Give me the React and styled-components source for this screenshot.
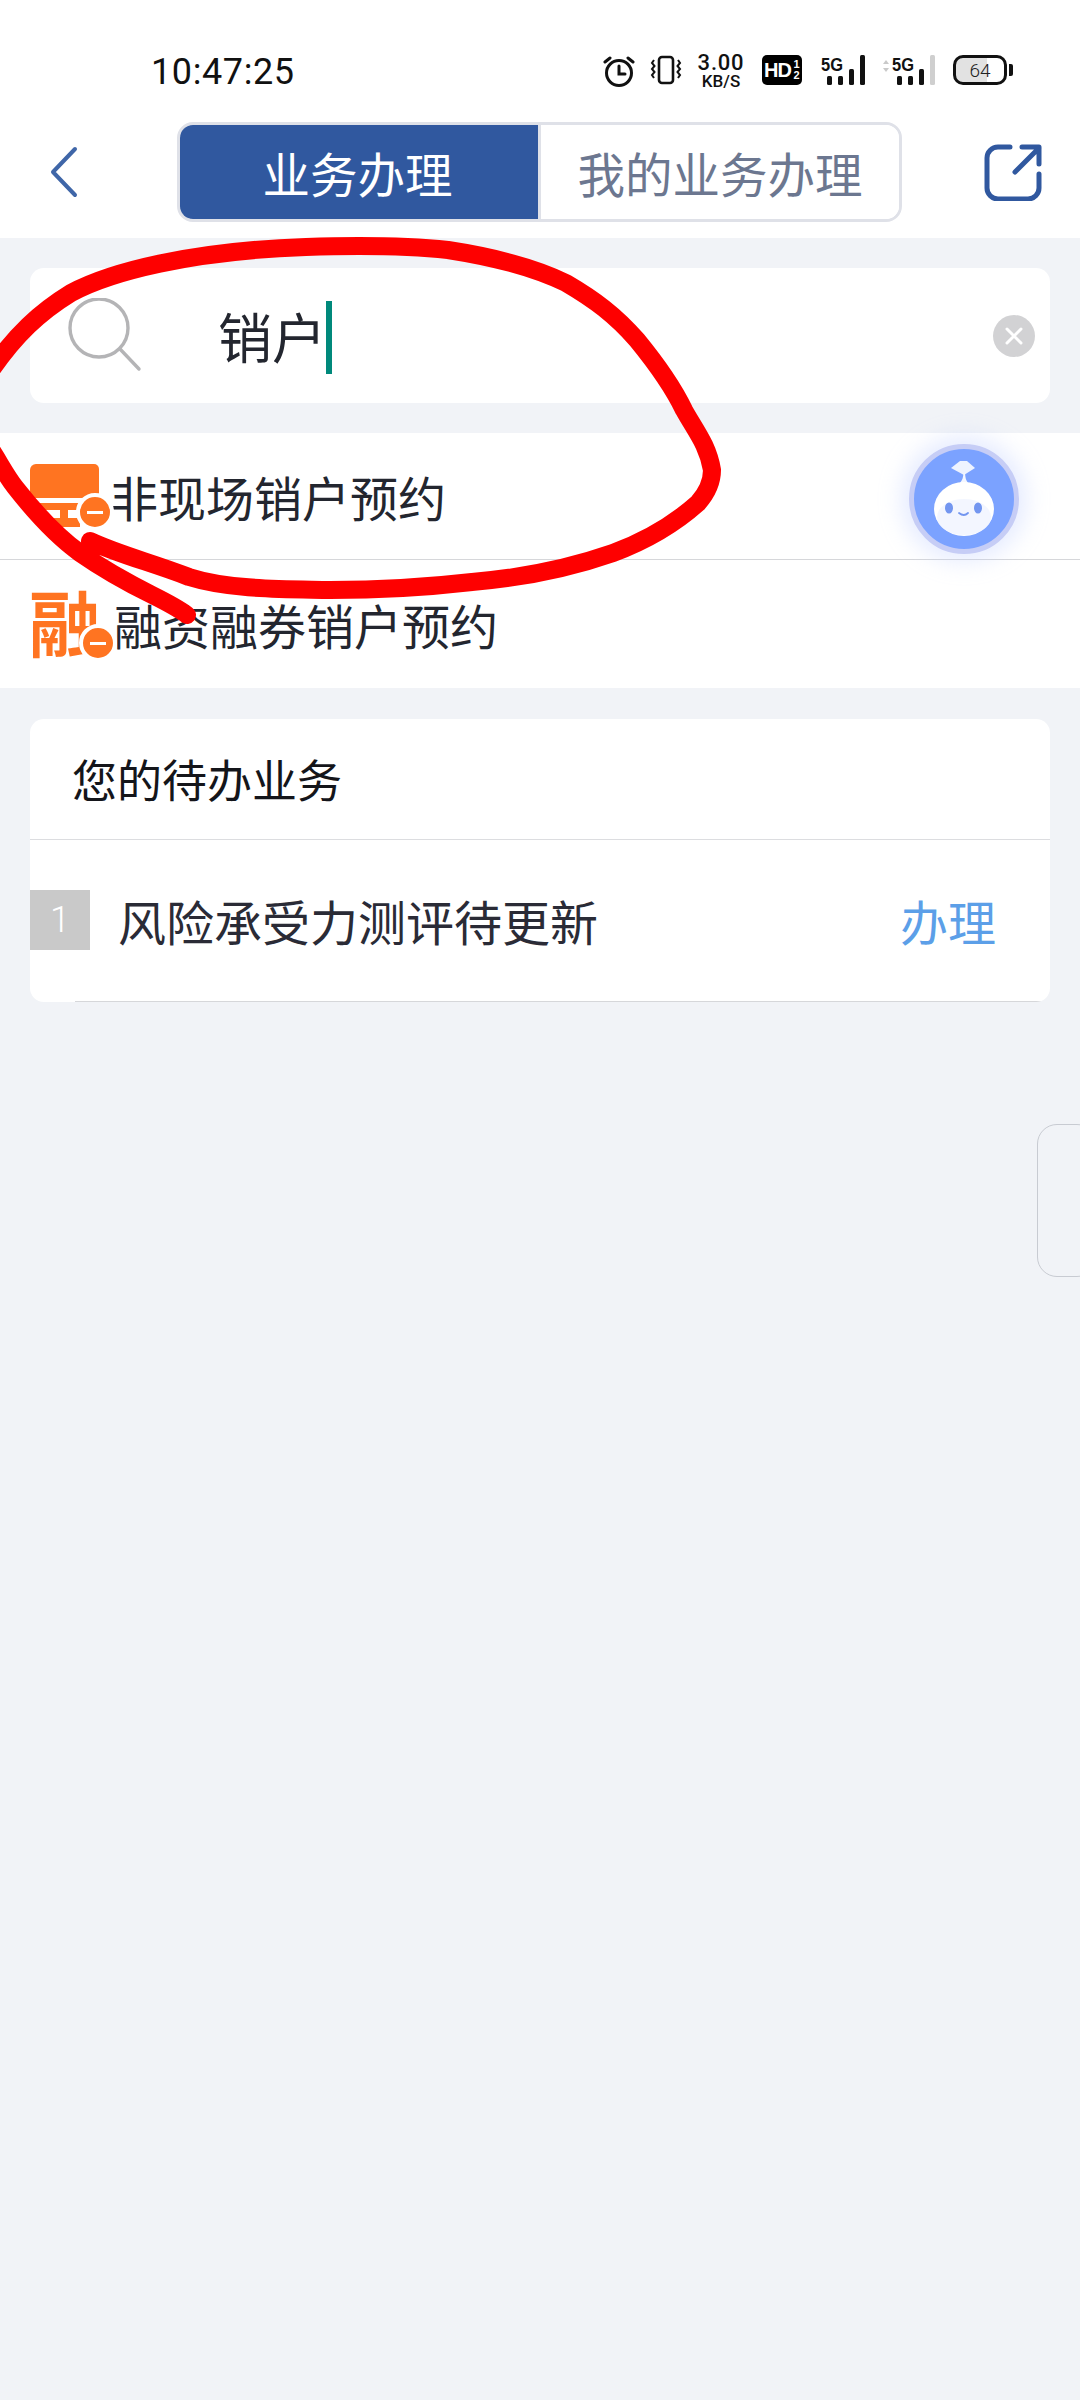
import styled, { createGlobalStyle } from "styled-components";

const GlobalStyle = createGlobalStyle`
  html, body {
    margin: 0;
    padding: 0;
    background: #f1f3f7;
  }
  * {
    box-sizing: border-box;
  }
`;

const CJK = `"Noto Sans CJK SC", "Noto Sans", sans-serif`;

const Page = styled.div`
  position: relative;
  width: 1080px;
  height: 2400px;
  overflow: hidden;
  background: #f1f3f7;
  font-family: ${CJK};
  color: #23262f;
`;

const Top = styled.header`
  background: #fff;
  height: 238px;
`;

const StatusBar = styled.div`
  height: 122px;
  padding: 52px 67px 0 151px;
  display: flex;
  align-items: flex-start;
  justify-content: space-between;
`;

const Clock = styled.span`
  font-family: Roboto, sans-serif;
  font-size: 36px;
  line-height: 40px;
  letter-spacing: 0.6px;
  color: #111;
`;

const StatusIcons = styled.div`
  display: flex;
  align-items: flex-start;
  margin-top: 3px;
`;

const Speed = styled.div`
  width: 50px;
  margin: -2px 16px 0 14px;
  display: flex;
  flex-direction: column;
  align-items: center;
  font-family: Roboto, sans-serif;
  color: #111;
  strong {
    font-size: 22px;
    line-height: 20px;
    font-weight: 500;
    letter-spacing: 0.8px;
  }
  span {
    font-size: 17px;
    line-height: 16px;
    font-weight: 500;
  }
`;

const HdBadge = styled.div`
  width: 40px;
  height: 30px;
  margin-right: 18px;
  border-radius: 5px;
  background: #000;
  color: #fff;
  display: flex;
  align-items: center;
  justify-content: center;
  font-family: "Liberation Sans", sans-serif;
  font-weight: 700;
  font-size: 20px;
  letter-spacing: -1px;
  small {
    font-size: 11px;
    line-height: 11px;
    width: 8px;
    margin-left: 1px;
    text-align: center;
  }
`;

const Battery = styled.div`
  position: relative;
  width: 54px;
  height: 30px;
  margin-left: 17px;
  border: 3px solid #111;
  border-radius: 10px;
  overflow: hidden;
  display: flex;
  align-items: center;
  justify-content: center;
  font-family: Roboto, sans-serif;
  font-size: 19px;
  font-weight: 300;
  color: #222;
  background: linear-gradient(to right, #e2e2e2 64%, #fff 64%);
`;

const BatteryNub = styled.div`
  width: 4px;
  height: 12px;
  margin: 9px 0 0 2px;
  border-radius: 0 2px 2px 0;
  background: #111;
`;

const Nav = styled.nav`
  height: 116px;
  display: grid;
  grid-template-columns: 177px 725px 178px;
`;

const NavButton = styled.div`
  height: 100px;
  display: flex;
  align-items: center;
  padding-left: ${(p) => p.$left}px;
`;

const Tabs = styled.div`
  height: 100px;
  display: flex;
  border: 3px solid #dfe1e8;
  border-radius: 16px;
  overflow: hidden;
`;

const Tab = styled.div`
  flex: ${(p) => (p.$active ? "0 0 358px" : "1")};
  padding-right: ${(p) => (p.$active ? "3px" : "0")};
  display: flex;
  align-items: center;
  justify-content: center;
  font-size: 47.5px;
  background: ${(p) => (p.$active ? "#30589f" : "#fff")};
  color: ${(p) => (p.$active ? "#fff" : "#6c7790")};
  border-left: ${(p) => (p.$active ? "none" : "3px solid #dfe1e8")};
  border-radius: ${(p) => (p.$active ? "10px 0 0 10px" : "0")};
`;

const SearchBox = styled.div`
  height: 135px;
  margin: 30px 30px 30px;
  padding: 0 15px 0 36px;
  background: #fff;
  border-radius: 14px;
  display: flex;
  align-items: center;
`;

const SearchText = styled.span`
  margin-left: 76px;
  font-size: 54px;
  line-height: 60px;
`;

const Caret = styled.i`
  width: 6px;
  height: 73px;
  margin: 0 0 -4px 0;
  background: #00897b;
`;

const ClearButton = styled.div`
  width: 42px;
  height: 42px;
  margin-left: auto;
  border-radius: 50%;
  background: #d2d2d4;
  display: flex;
  align-items: center;
  justify-content: center;
`;

const ResultList = styled.div`
  background: #fff;
`;

const Result = styled.div`
  height: ${(p) => p.$height}px;
  padding-left: 30px;
  display: flex;
  align-items: center;
  border-bottom: ${(p) => (p.$divider ? "1px solid #d6d7da" : "none")};
  font-size: 48px;
`;

const ResultIcon = styled.div`
  position: relative;
  width: ${(p) => p.$width}px;
  height: ${(p) => p.$h}px;
  flex: none;
`;

const LogoGlyph = styled.span`
  display: block;
  width: 74px;
  margin: -3px 0 0 -1px;
  font-size: 72px;
  line-height: 68px;
  font-weight: 700;
  color: #ff7421;
`;

const MinusBadge = styled.span`
  position: absolute;
  right: ${(p) => p.$right}px;
  bottom: ${(p) => p.$bottom}px;
  width: 38px;
  height: 38px;
  border-radius: 50%;
  border: 4px solid #fff;
  background: #ff7421;
  display: flex;
  align-items: center;
  justify-content: center;
  &::after {
    content: "";
    width: 16px;
    height: 3px;
    background: #fff;
  }
`;

const Todo = styled.section`
  height: 283px;
  margin: 31px 30px 0;
  background: #fff;
  border-radius: 14px;
  overflow: hidden;
`;

const TodoTitle = styled.div`
  height: 121px;
  padding: 0 0 1px 42px;
  display: flex;
  align-items: center;
  border-bottom: 1px solid #dcdde0;
  font-size: 45px;
  color: #14151a;
`;

const TodoRow = styled.div`
  height: 162px;
  padding: 0 54px 3px 0;
  display: flex;
  align-items: center;
  position: relative;
  &::after {
    content: "";
    position: absolute;
    left: 45px;
    right: 0;
    bottom: 0;
    height: 1px;
    background: #d6d7da;
  }
`;

const TodoIndex = styled.span`
  width: 60px;
  height: 60px;
  display: flex;
  align-items: center;
  justify-content: center;
  background: #c9c9c9;
  color: #fff;
  font-family: Roboto, sans-serif;
  font-weight: 300;
  font-size: 36px;
`;

const TodoText = styled.span`
  margin-left: 28px;
  font-size: 48px;
  color: #2a2b36;
`;

const TodoAction = styled.span`
  margin-left: auto;
  font-size: 48px;
  color: #5c9fe8;
`;

const Assistant = styled.div`
  position: absolute;
  left: 909px;
  top: 444px;
  width: 110px;
  height: 110px;
  border-radius: 50%;
  background: #7ba2ff;
  border: 5px solid #c6cdf6;
  box-shadow: 0 0 22px 8px rgba(190, 205, 255, 0.38);
`;

const SideHandle = styled.div`
  position: absolute;
  left: 1037px;
  top: 1124px;
  width: 60px;
  height: 153px;
  border: 1px solid #c8cbd2;
  border-radius: 20px;
  background: #f1f3f7;
`;

const Scribble = styled.svg`
  position: absolute;
  left: 0;
  top: 0;
  pointer-events: none;
`;

const AlarmIcon = () => (
  <svg width="32" height="32" viewBox="0 0 32 32" fill="none" stroke="#111" strokeLinecap="round">
    <circle cx="16" cy="18" r="12.5" strokeWidth="3" />
    <path d="M16 11v8h6" strokeWidth="3" />
    <path d="M2 7l5-4M30 7l-5-4" strokeWidth="3" />
  </svg>
);

const VibrateIcon = () => (
  <svg width="32" height="30" viewBox="0 0 32 30" fill="none" stroke="#111" style={{ marginLeft: 15 }}>
    <rect x="9" y="2" width="14" height="26" rx="3" strokeWidth="2.6" />
    <path d="M4 5l-2 3 2.5 3-2.5 3 2.5 3-2.5 3 2 3M28 5l2 3-2.5 3 2.5 3-2.5 3 2.5 3-2 3" strokeWidth="2" />
  </svg>
);

const SignalIcon = ({ dual }) => (
  <svg width={dual ? 56 : 46} height="32" viewBox={dual ? "0 0 56 32" : "0 0 46 32"} style={{ marginLeft: dual ? 14 : 0 }}>
    {dual && <path d="M3 9l3-4 3 4zM3 13l3 4 3-4z" fill="#c9c9c9" />}
    <text
      x={dual ? 12 : 1}
      y="16"
      fontFamily="Liberation Sans, sans-serif"
      fontWeight="700"
      fontSize="19"
      textLength="22"
      lengthAdjust="spacingAndGlyphs"
      fill="#111"
    >
      5G
    </text>
    <g transform={dual ? "translate(9 0)" : "translate(-1 0)"}>
      <rect x="8" y="21" width="5" height="9" rx="1.5" fill="#111" />
      <rect x="19" y="21" width="5" height="9" rx="1.5" fill="#111" />
      <rect x="30" y="14" width="5" height="16" rx="1.5" fill="#111" />
      <rect x="41" y="0" width="5" height="30" rx="1.5" fill={dual ? "#cfcfcf" : "#111"} />
    </g>
  </svg>
);

const BackIcon = () => (
  <svg width="30" height="52" viewBox="0 0 30 52" fill="none" stroke="#3f66a8" strokeWidth="4" strokeLinecap="round" strokeLinejoin="round">
    <path d="M26 3L4 26l22 23" />
  </svg>
);

const ShareIcon = () => (
  <svg width="58" height="58" viewBox="0 0 58 58" fill="none" stroke="#30589f" strokeWidth="5" strokeLinecap="round" strokeLinejoin="round">
    <path d="M26 4H14A11 11 0 0 0 3 15v30a11 11 0 0 0 11 11h30a11 11 0 0 0 11-11V31" />
    <path d="M31 29L55 5M38 4h17v17" />
  </svg>
);

const SearchIcon = () => (
  <svg width="76" height="76" viewBox="0 0 76 76" fill="none" stroke="#b4b4b6" strokeWidth="3.4" strokeLinecap="round">
    <circle cx="33" cy="30" r="29" />
    <path d="M54 51l19 20" />
  </svg>
);

const ClearIcon = () => (
  <svg width="20" height="20" viewBox="0 0 20 20" stroke="#fff" strokeWidth="3" strokeLinecap="round">
    <path d="M3 3l14 14M17 3L3 17" />
  </svg>
);

const ScreenIcon = () => (
  <svg width="70" height="64" viewBox="0 0 70 64" fill="#ff7421" style={{ display: "block" }}>
    <path d="M6 0h58a5 5 0 0 1 5 5v29H0V6a6 6 0 0 1 6-6z" />
    <rect x="0" y="39" width="56" height="7" />
    <rect x="30" y="46" width="8" height="12" />
    <rect x="14" y="54" width="36" height="9" />
  </svg>
);

const Mascot = () => (
  <svg width="100" height="100" viewBox="0 0 100 100">
    <path d="M37 19l9-7 7 0 8 7-11 7z" fill="#eef3ff" />
    <path d="M44 36C48 32 49 30 49.5 24h1.5C51.5 30 52 32 56 36z" fill="#f4f7ff" />
    <ellipse cx="50" cy="60" rx="30" ry="27" fill="#fff" />
    <ellipse cx="50" cy="68" rx="27" ry="18" fill="#eef2ff" opacity="0.7" />
    <ellipse cx="35" cy="59" rx="4" ry="5.5" fill="#7396f0" />
    <ellipse cx="64" cy="59" rx="4" ry="5.5" fill="#7396f0" />
    <path d="M45 64q5 4 9 0" stroke="#7396f0" strokeWidth="1.8" fill="none" strokeLinecap="round" />
  </svg>
);

export default function App() {
  return (
    <Page>
      <GlobalStyle />
      <Top>
        <StatusBar>
          <Clock>10:47:25</Clock>
          <StatusIcons>
            <AlarmIcon />
            <VibrateIcon />
            <Speed>
              <strong>3.00</strong>
              <span>KB/S</span>
            </Speed>
            <HdBadge>
              HD
              <small>
                1<br />2
              </small>
            </HdBadge>
            <SignalIcon />
            <SignalIcon dual />
            <Battery>64</Battery>
            <BatteryNub />
          </StatusIcons>
        </StatusBar>
        <Nav>
          <NavButton $left={49}>
            <BackIcon />
          </NavButton>
          <Tabs>
            <Tab $active>业务办理</Tab>
            <Tab>我的业务办理</Tab>
          </Tabs>
          <NavButton $left={82}>
            <ShareIcon />
          </NavButton>
        </Nav>
      </Top>

      <SearchBox>
        <SearchIcon />
        <SearchText>销户</SearchText>
        <Caret />
        <ClearButton>
          <ClearIcon />
        </ClearButton>
      </SearchBox>

      <ResultList>
        <Result $height={127} $divider>
          <ResultIcon $width={80} $h={64}>
            <ScreenIcon />
            <MinusBadge $right={-4} $bottom={-3} />
          </ResultIcon>
          非现场销户预约
        </Result>
        <Result $height={128}>
          <ResultIcon $width={84} $h={70}>
            <LogoGlyph>融</LogoGlyph>
            <MinusBadge $right={-3} $bottom={-3} />
          </ResultIcon>
          融资融券销户预约
        </Result>
      </ResultList>

      <Todo>
        <TodoTitle>您的待办业务</TodoTitle>
        <TodoRow>
          <TodoIndex>1</TodoIndex>
          <TodoText>风险承受力测评待更新</TodoText>
          <TodoAction>办理</TodoAction>
        </TodoRow>
      </Todo>

      <Assistant>
        <Mascot />
      </Assistant>
      <SideHandle />

      <Scribble width="1080" height="700" viewBox="0 0 1080 700" fill="none">
        <path
          d="M187 615C165 598 133 590 80 553C55 535 33 510 15 487C5 474 0 463 -10 448M-10 372C15 335 40 312 71 293C110 272 190 251 306 247C370 245 410 246 448 250C500 258 535 268 566 283C595 300 615 315 637 340C655 362 672 385 684 410C695 430 708 445 712 470C712 485 705 495 698 503C670 528 640 543 613 553C570 568 520 578 472 582C420 588 370 590 330 590C285 589 230 590 189 577C150 562 120 555 90 541"
          stroke="#fe0000"
          strokeWidth="18"
          strokeLinecap="round"
          strokeLinejoin="round"
        />
      </Scribble>
    </Page>
  );
}
